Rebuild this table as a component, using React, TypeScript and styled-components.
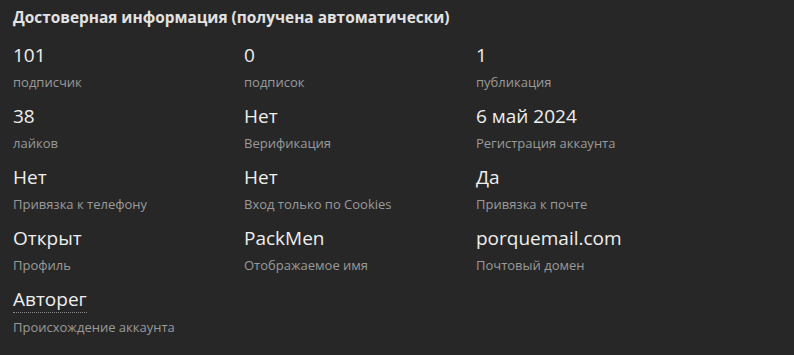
import React from "react";
import styled, { createGlobalStyle } from "styled-components";

const Global = createGlobalStyle`
  html, body { margin: 0; padding: 0; background: #272727; }
  body { font-family: "Open Sans", "Noto Sans", sans-serif; }
`;

const Panel = styled.section`
  width: 794px;
  height: 355px;
  box-sizing: border-box;
  padding: 8px 13px 0 13px;
  background: #272727;
`;

const Title = styled.h2`
  margin: 0 0 15px 0;
  font-size: 15.4px;
  line-height: 20px;
  font-weight: 700;
  color: #e2e2e2;
`;

const Grid = styled.div`
  display: grid;
  grid-template-columns: 231px 232px 231px;
  row-gap: 12px;
`;

const Item = styled.div`
  display: flex;
  flex-direction: column;
  gap: 4px;
  align-items: flex-start;
`;

const Value = styled.span<{ $dotted?: boolean }>`
  font-size: 19px;
  line-height: 25px;
  color: #eeeeee;
  border-bottom: ${(p) => (p.$dotted ? "1px dotted #8a8a8a" : "0")};
`;

const Label = styled.span`
  font-size: 13px;
  line-height: 20px;
  color: #9a9a9a;
`;

const items: { value: string; label: string; dotted?: boolean }[] = [
  { value: "101", label: "подписчик" },
  { value: "0", label: "подписок" },
  { value: "1", label: "публикация" },
  { value: "38", label: "лайков" },
  { value: "Нет", label: "Верификация" },
  { value: "6 май 2024", label: "Регистрация аккаунта" },
  { value: "Нет", label: "Привязка к телефону" },
  { value: "Нет", label: "Вход только по Cookies" },
  { value: "Да", label: "Привязка к почте" },
  { value: "Открыт", label: "Профиль" },
  { value: "PackMen", label: "Отображаемое имя" },
  { value: "porquemail.com", label: "Почтовый домен" },
  { value: "Авторег", label: "Происхождение аккаунта", dotted: true },
];

export default function App() {
  return (
    <>
      <Global />
      <Panel>
        <Title>Достоверная информация (получена автоматически)</Title>
        <Grid>
          {items.map((it, i) => (
            <Item key={i}>
              <Value $dotted={it.dotted}>{it.value}</Value>
              <Label>{it.label}</Label>
            </Item>
          ))}
        </Grid>
      </Panel>
    </>
  );
}
